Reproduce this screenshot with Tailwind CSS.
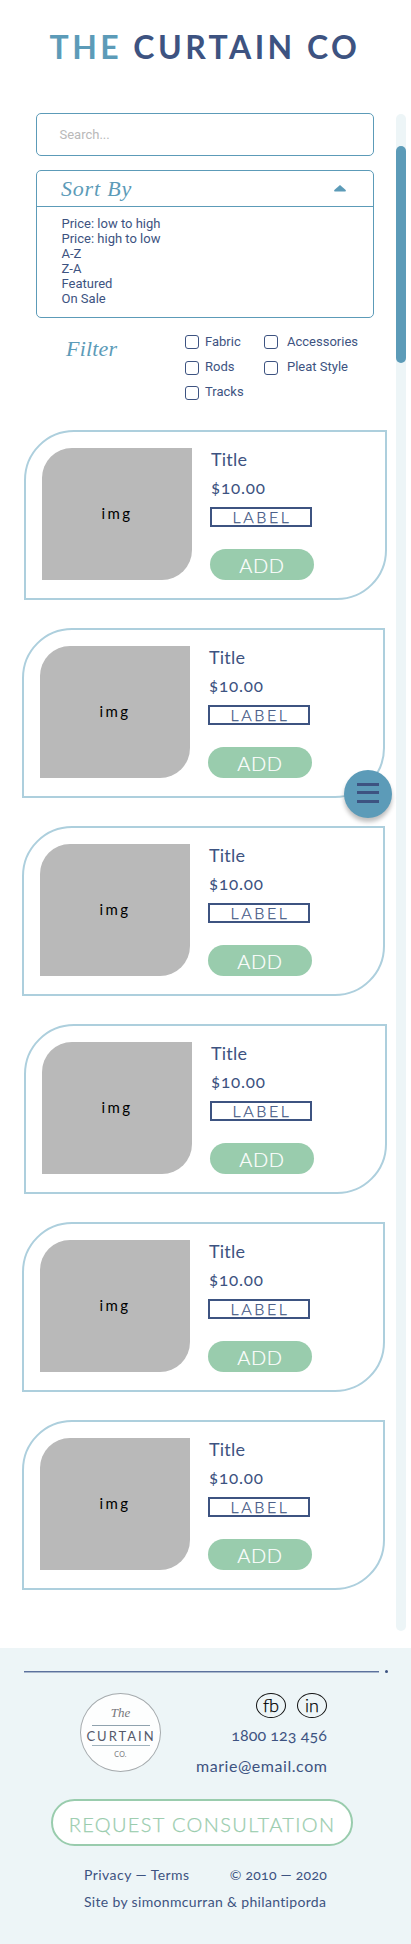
<!DOCTYPE html>
<html lang="en">
<head>
<meta charset="utf-8">
<title>The Curtain Co</title>
<script src="https://cdn.jsdelivr.net/npm/@tailwindcss/browser@4"></script>
</head>
<body class="relative w-[411px] h-[1944px] bg-white font-[Lato,sans-serif] text-[#3d5381] overflow-x-hidden flex flex-col">
<header class="h-[113px] pt-[27px] pl-[49.5px] shrink-0">
  <h1 class="whitespace-nowrap text-[32px] leading-[40px] font-bold tracking-[3.45px]"><span class="text-[#5c9bb8]">THE</span> CURTAIN CO</h1>
</header>

<main class="flex flex-col h-[1535px] shrink-0">
  <section class="ml-9 w-[338px] font-[Roboto,sans-serif] text-[13px] leading-[15px]">
    <div class="h-[43px] border border-[#5c9bb8] rounded-[5px] flex items-center pl-[22.5px] text-[#b9b9b9]">Search...</div>
    <div class="mt-[14px] h-[148px] border border-[#5c9bb8] rounded-[5px]">
      <div class="h-9 border-b border-[#5c9bb8] flex items-center justify-between pl-6 pr-[27px] text-[#5c9bb8]">
        <span class="font-['Liberation_Serif',serif] italic text-[22px] leading-[30px] tracking-[.8px]">Sort By</span>
        <svg class="w-3 h-[7px]" viewBox="0 0 12 7"><path d="M6 0 11.7 5 Q12.2 6.5 11.2 6.5H.8Q-.2 6.5 .3 5Z" fill="#5c9bb8"/></svg>
      </div>
      <ul class="pl-[24.5px] pt-[9px]">
        <li>Price: low to high</li><li>Price: high to low</li><li>A-Z</li><li>Z-A</li><li>Featured</li><li>On Sale</li>
      </ul>
    </div>
  </section>

  <section class="flex h-[112px] pt-[16px] pl-[66px] font-[Roboto,sans-serif] text-[13px] leading-[15px]">
    <h2 class="w-[119px] font-['Liberation_Serif',serif] italic text-[22px] leading-[30px] tracking-[.2px] text-[#5c9bb8]">Filter</h2>
    <div class="w-[79px] flex flex-col gap-[11px] pt-[1px]">
      <label class="flex h-[15px] gap-[6px]"><i class="size-[14px] border border-[#3d5381] rounded-[3px]"></i><span class="-mt-[1px]">Fabric</span></label>
      <label class="flex h-[14px] gap-[6px]"><i class="size-[14px] border border-[#3d5381] rounded-[3px]"></i><span class="-mt-[2px]">Rods</span></label>
      <label class="flex h-[14px] gap-[6px]"><i class="size-[14px] border border-[#3d5381] rounded-[3px]"></i><span class="-mt-[2px]">Tracks</span></label>
    </div>
    <div class="flex flex-col gap-[11px] pt-[1px]">
      <label class="flex h-[15px] gap-[9px]"><i class="size-[14px] border border-[#3d5381] rounded-[3px]"></i><span class="-mt-[1px]">Accessories</span></label>
      <label class="flex h-[14px] gap-[9px]"><i class="size-[14px] border border-[#3d5381] rounded-[3px]"></i><span class="-mt-[2px]">Pleat Style</span></label>
    </div>
  </section>

  <section id="products" class="ml-[22px] flex flex-col gap-7"></section>
</main>

<footer class="h-[296px] shrink-0 bg-[#edf5f7] pt-[22px]">
  <div class="ml-6 flex items-center h-[3px]">
    <div class="w-[355px] h-[2px] border-t border-[#5c719d] bg-[#a9b8cd]"></div>
    <div class="ml-[6px] size-[3px] rounded-full bg-[#3d5381]"></div>
  </div>
  <div class="flex justify-between mt-[20px] pl-[80px] pr-[84px] h-[90px]">
    <div class="w-[81px] h-[79px] rounded-[50%] border border-[#a5aaad] bg-[#fdfefe] flex flex-col items-center">
      <span class="font-['Liberation_Serif',serif] italic text-[13px] leading-[14px] mt-[12px] text-[#77777c]">The</span>
      <span class="mt-[5px] w-[58px] h-px bg-[#8fa2ae]"></span>
      <span class="mt-[2px] text-[13px] leading-[16px] tracking-[2px] -mr-[1px] text-[#55596a]">CURTAIN</span>
      <span class="mt-px w-[58px] h-px bg-[#a0b3bd]"></span>
      <span class="mt-[4px] text-[7px] leading-[8px] tracking-[.2px] text-[#77777c]">CO.</span>
    </div>
    <div class="flex flex-col items-end text-[16px] leading-[20px]">
      <div class="flex gap-[11px] text-black text-[18px] font-light [-webkit-text-stroke:.25px_#000]">
        <span class="w-[30px] h-[25px] rounded-[50%] border border-[#111] flex items-center justify-center pb-[2px]">fb</span>
        <span class="w-[30px] h-[25px] rounded-[50%] border border-[#111] flex items-center justify-center pb-[2px]">in</span>
      </div>
      <span class="mt-[7px] tracking-[.1px] [font-variant-numeric:oldstyle-nums]">1800 123 456</span>
      <span class="mt-[11px] tracking-[.55px] -mr-[.5px]">marie@email.com</span>
    </div>
  </div>
  <button class="block ml-[51px] mt-[16px] w-[302px] h-[47px] rounded-full border-2 border-[#99ccad] bg-white text-[#99ccad] font-light text-[20px] leading-[24px] tracking-[1.35px] whitespace-nowrap pt-[3px] [-webkit-text-stroke:.25px_#99ccad]">REQUEST CONSULTATION</button>
  <div class="flex justify-between mt-[19px] pl-[84px] pr-[84px] text-[14px] leading-[20px]">
    <span class="tracking-[.45px]">Privacy — Terms</span><span class="tracking-[.25px] [font-variant-numeric:oldstyle-nums]">© 2010 — 2020</span>
  </div>
  <p class="pl-[84px] mt-[7px] text-[14px] leading-[20px] tracking-[.33px] whitespace-nowrap">Site by simonmcurran &amp; philantiporda</p>
</footer>

<div class="absolute left-[396px] top-[114px] w-[10px] h-[1517px] rounded-full bg-[#edf5f7] pt-8"><div class="h-[217px] rounded-full bg-[#5c9bb8]"></div></div>
<button class="absolute left-[344px] top-[770px] size-12 rounded-full bg-[#5c9bb8] shadow-[0_4px_4px_rgba(0,0,0,.25)] flex items-center justify-center" aria-label="Menu">
  <svg class="w-[22px] h-[20px] -mt-[2px]" viewBox="0 0 22 20" fill="#3d5381"><path d="M0 0h22v3H0zM0 8h22v3H0zM0 17h22v3H0z"/></svg>
</button>

<template id="card">
  <article class="w-[363px] h-[170px] border-2 border-[#adcfdd] rounded-tl-[50px] rounded-br-[50px] p-4 flex gap-[18px]">
    <div class="w-[150px] h-[132px] shrink-0 bg-[#b9b9b9] rounded-tl-[30px] rounded-br-[30px] flex items-center justify-center text-black text-[15px] tracking-[2.5px] pb-[1px]">img</div>
    <div class="flex flex-col items-start">
      <h3 class="ml-[1px] text-[18px] leading-[22px] tracking-[.2px]">Title</h3>
      <p class="mt-[8px] ml-[1px] text-[17px] leading-[20px] tracking-[.8px] [font-variant-numeric:oldstyle-nums]">$10.00</p>
      <div class="mt-[9px] w-[102px] h-[20px] border-2 border-[#3d5381] text-[16px] leading-[15px] tracking-[2.6px] font-light [-webkit-text-stroke:.25px_#3d5381] text-center pl-[2px]">LABEL</div>
      <button class="mt-[22px] w-[104px] h-[31px] rounded-full bg-[#99ccad] text-white font-light text-[20px] leading-[31px] tracking-[.6px] pt-[1px] [-webkit-text-stroke:.2px_#fff]">ADD</button>
    </div>
  </article>
</template>
<script>
  const list = document.getElementById('products');
  for (let i = 0; i < 6; i++) {
    const card = document.getElementById('card').content.cloneNode(true);
    if (i % 3 === 0) card.firstElementChild.classList.add('ml-[2px]');
    list.append(card);
  }
</script>
</body>
</html>
